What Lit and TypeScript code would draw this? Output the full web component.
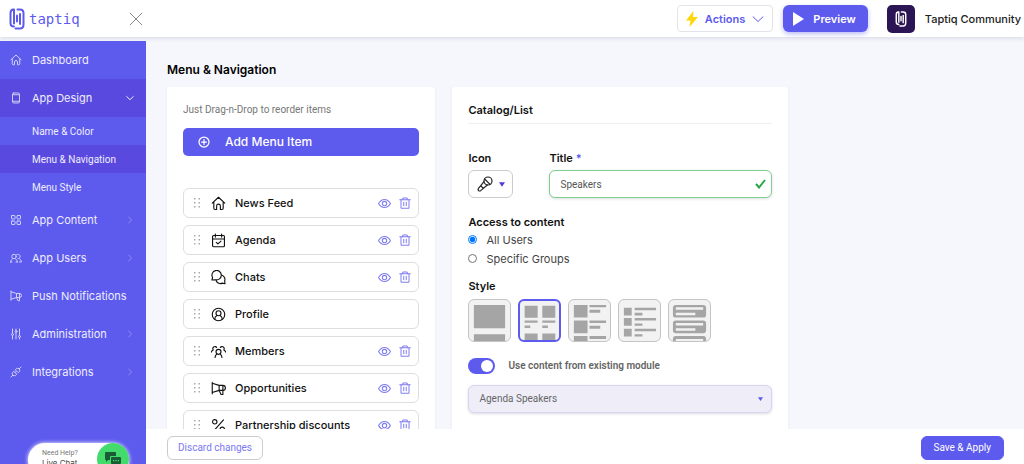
import { LitElement, html, css, svg, nothing, TemplateResult } from "lit";
import { customElement, state } from "lit/decorators.js";
import { classMap } from "lit/directives/class-map.js";

/* Stroke icons, all drawn on a 24 x 24 grid. */
const icons: Record<string, TemplateResult> = {
  home: svg`<path d="M2 11.500 12 2 22 11.500M4.500 9.500V19.500q0 2 2 2H9V16a3 3 0 0 1 6 0v5.500h2.500q2 0 2-2V9.500"/>`,
  phone: svg`<rect x="5" y="2" width="14" height="20" rx="2.500"/><path d="M5 5.500h14M5 18.500h14"/>`,
  grid: svg`<rect x="3" y="3" width="7" height="7" rx="1"/><rect x="14" y="3" width="7" height="7" rx="1"/><rect x="3" y="14" width="7" height="7" rx="1"/><rect x="14" y="14" width="7" height="7" rx="1"/>`,
  users: svg`<circle cx="8" cy="9" r="4.500"/><path d="M1 20q0-4 4-6.500M15 20q0-4-4-6.500M1 20h3M12 20h3"/><path d="M13 5.500a4.500 4.500 0 1 1 3 8M19 13.500q4 2.500 4 6.500h-4"/>`,
  horn: svg`<path d="M2 2v18.500M2 3.500 13 7h6a4 4 0 0 1 0 8h-6L2 18.500M13 7v8M13 15l3 6.500h3V7"/>`,
  sliders: svg`<path d="M5 2v9M5 15v7M12 2v3M12 9v13M19 2v13M19 19v3"/><circle cx="5" cy="13" r="2"/><circle cx="12" cy="7" r="2"/><circle cx="19" cy="17" r="2"/>`,
  plug: svg`<path d="M2 22l3.500-3.500M5.500 18.500a4.500 4.500 0 0 1 0-6l2-2 6 6-2 2a4.500 4.500 0 0 1-6 0zM10 13l2.500-2.500M22 2l-3.500 3.500M18.500 5.500a4.500 4.500 0 0 1 0 6l-2 2-6-6 2-2a4.500 4.500 0 0 1 6 0z"/>`,
  calendar: svg`<rect x="2.500" y="4" width="19" height="18" rx="1.500"/><path d="M2.500 9.500h19M7 1.500v5M17 1.500v5M8.500 15l2.500 2.500 5-4.500"/>`,
  chats: svg`<path d="M1.500 16l1-4a7.500 7.500 0 1 1 4.500 3.500zM17.500 8.500a6.800 6.800 0 0 1 4.300 9l.7 4.500-4.500-1A7 7 0 0 1 8.500 17.500"/>`,
  profile: svg`<circle cx="12" cy="12" r="10"/><circle cx="12" cy="10" r="4"/><path d="M6 19.500q0-4 3.500-6M18 19.500q0-4-3.500-6"/>`,
  members: svg`<circle cx="12" cy="12.500" r="4"/><path d="M6.500 21.500q0-3.500 3-5.500M17.500 21.500q0-3.500-3-5.500M3.500 9.500A3.300 3.300 0 1 1 9 5.500M.5 13q.5-2.500 3-3.500M20.500 9.500A3.300 3.300 0 1 0 15 5.500M23.500 13q-.5-2.500-3-3.500"/>`,
  percent: svg`<circle cx="6" cy="6" r="3.500"/><circle cx="18" cy="18" r="3.500"/><path d="M20 3 4 21"/>`,
  mic: svg`<circle cx="16.500" cy="7.500" r="6"/><path d="M11.500 4.500l8 8M10.500 8.500 2 19q-1 2 .5 3t3 0L15.500 13.500M6 15l3.500 3.500"/>`,
  eye: svg`<path d="M1 12q4.500-7.500 11-7.500t11 7.500q-4.500 7.500-11 7.500t-11-7.500z"/><circle cx="12" cy="12" r="4"/>`,
  trash: svg`<path d="M1.500 5.500h21M7.500 5.500V2h9v3.500M4 5.500V22.500h16V5.500M9.500 10.500v7M14.500 10.500v7"/>`,
  plus: svg`<circle cx="12" cy="12" r="10"/><path d="M12 7v10M7 12h10"/>`,
  close: svg`<path d="M2 2l20 20M22 2 2 22"/>`,
  right: svg`<path d="M8 3l8.500 9L8 21"/>`,
  down: svg`<path d="M2 7.500l10 9.500 10-9.500"/>`,
};

const icon = (name: string, cls = "") =>
  html`<svg class="icon ${cls}" viewBox="0 0 24 24" aria-hidden="true">${icons[name]}</svg>`;

const mark = html`<svg class="mark" viewBox="0 0 16 22" aria-hidden="true">
  <path d="M4.500 1.500Q1.500 1.500 1.500 5v10q0 3.500 3.500 3.500M5 1.500v14M8.500 1.500H11q3.500 0 3.500 3.500v11.500q0 4-3.500 4H6.500M11 6v10" />
  <path d="M8 7.500v6" />
</svg>`;

const triangle = html`<svg class="triangle" viewBox="0 0 8 6" aria-hidden="true"><path d="M0 0h8L4 6z" /></svg>`;

const nav = [
  { label: "Dashboard", icon: "home" },
  { label: "App Design", icon: "phone", children: ["Name & Color", "Menu & Navigation", "Menu Style"] },
  { label: "App Content", icon: "grid", more: true },
  { label: "App Users", icon: "users", more: true },
  { label: "Push Notifications", icon: "horn" },
  { label: "Administration", icon: "sliders", more: true },
  { label: "Integrations", icon: "plug", more: true },
];

const menu = [
  { label: "News Feed", icon: "home" },
  { label: "Agenda", icon: "calendar" },
  { label: "Chats", icon: "chats" },
  { label: "Profile", icon: "profile", fixed: true },
  { label: "Members", icon: "members" },
  { label: "Opportunities", icon: "horn" },
  { label: "Partnership discounts", icon: "percent" },
];

/* Blocks of each layout preview, on a 42 x 42 grid. */
const layouts = [
  { name: "Large cards", art: svg`<path d="M5 5h32v24H5zM5 35h32v7H5z"/>` },
  { name: "Two columns", art: svg`<path d="M5 5h14v13H5zM24 5h14v13H24zM5 21h14v2.500H5zM24 21h14v2.500H24zM5 26.500h6v2.500H5zM24 26.500h6v2.500h-6zM5 35h14v7H5zM24 35h14v7H24z"/>` },
  { name: "Large thumbnails", art: svg`<path d="M5 5h14v13H5zM5 21h14v13H5zM5 37h14v5H5zM21 5h17v2.500H21zM21 10h11v3H21zM21 21h17v2.500H21zM21 26.500h11v3H21zM21 37h17v3H21z"/>` },
  { name: "Small thumbnails", art: svg`<path d="M5 8h8v8H5zM5 18.500h8v8H5zM5 29.500h8v8H5zM16 8h22v2.500H16zM16 13h8v3h-8zM16 18.500h22V21H16zM16 24h8v2.500h-8zM16 29.500h22V32H16zM16 35h8v2.500h-8z"/>` },
  { name: "Banners", art: svg`<path fill-rule="evenodd" d="M7 5h28q3 0 3 3v7q0 3-3 3H7q-3 0-3-3V8q0-3 3-3zM7 7.500V10h28V7.500zM7 13v2.500h20V13zM7 21h28q3 0 3 3v7q0 3-3 3H7q-3 0-3-3v-7q0-3 3-3zM7 23.500V26h28v-2.500zM7 29v2.500h20V29zM4 42v-2q0-3 3-3h28q3 0 3 3v2h-3v-2H7v2z"/>` },
];

@customElement("app-root")
export class AppRoot extends LitElement {
  @state() private layout = 1;

  static styles = css`
    :host {
      --brand: #5d5aee;
      --small: 10px/16px Roboto, "Liberation Sans", sans-serif;
      display: flex;
      flex-direction: column;
      height: 100vh;
      overflow: hidden;
      background: #f6f7fc;
      color: #111;
      font: 11px/16px Inter, "Liberation Sans", sans-serif;
    }
    *, *::before { box-sizing: border-box; }
    button, input, select { font: inherit; margin: 0; }
    button { cursor: pointer; }
    a { color: inherit; text-decoration: none; }
    ul { list-style: none; margin: 0; padding: 0; }
    h1, h2, p { margin: 0; }
    .icon {
      width: 12px;
      height: 12px;
      flex: none;
      fill: none;
      stroke: currentColor;
      stroke-width: 2;
      stroke-linejoin: round;
      stroke-linecap: round;
    }

    header {
      display: flex;
      align-items: center;
      flex: none;
      height: 37px;
      padding: 0 3px 0 9px;
      background: #fff;
      box-shadow: 0 2px 4px #dddeeb;
      margin-bottom: 4px;
    }
    .logo { display: flex; align-items: center; gap: 4px; width: 120px; color: var(--brand); }
    .mark { width: 16px; height: 22px; fill: none; stroke: currentColor; stroke-width: 2; stroke-linecap: round; }
    .word { font: 14px/20px "DejaVu Sans Mono", monospace; }
    .close { border: 0; padding: 0; background: none; color: #777; display: flex; }
    .close .icon { width: 14px; height: 14px; stroke-width: 1.500; }
    .tools { display: flex; align-items: center; margin-left: auto; }
    .actions, .preview {
      display: flex;
      align-items: center;
      height: 27px;
      border-radius: 4px;
      font-weight: 600;
    }
    .actions { gap: 7px; padding: 0 8px; border: 1px solid #e3e3ea; background: #fff; color: var(--brand); margin-right: 10px; }
    .bolt { width: 12px; height: 16px; fill: #ffd60a; }
    .preview { gap: 9px; padding: 0 12px 0 9px; border: 0; background: var(--brand); color: #fff; box-shadow: 0 2px 5px #bcbaf5; border-radius: 6px; }
    .play { width: 12px; height: 14px; fill: #fff; }
    .app { display: flex; align-items: center; gap: 10px; margin-left: 19px; color: #222; font-weight: 500; }
    .badge { display: grid; place-items: center; width: 28px; height: 28px; border-radius: 5px; background: #2b1554; color: #fff; }
    .badge .mark { width: 12px; height: 16px; }

    .body { display: flex; flex: 1; min-height: 0; }
    .side {
      position: relative;
      flex: none;
      width: 146px;
      overflow: hidden;
      background: var(--brand);
      color: #eeedff;
    }
    .item { display: flex; align-items: center; gap: 10px; height: 38px; padding: 0 12px 0 10px; white-space: nowrap; }
    .item .icon { stroke-width: 2; opacity: 0.8; }
    .item .right, .item .down { width: 8px; height: 8px; margin-left: auto; }
    .item .right { opacity: 0.5; }
    .item .down { stroke-width: 3; opacity: 1; }
    .open, .current { background: #5a49de; }
    .sub { display: flex; align-items: center; height: 28px; padding: 1px 0 0 32px; font: var(--small); }
    .chat {
      position: absolute;
      left: 28px;
      top: 402px;
      display: flex;
      width: 101px;
      height: 34px;
      padding: 5px 0 0 14px;
      border-radius: 17px;
      background: #fff;
      box-shadow: 0 0 4px #fff;
      color: #444;
      font-size: 8px;
      line-height: 10px;
    }
    .chat small { display: block; color: #777; font: 7px/10px Roboto, sans-serif; }
    .bubble {
      position: absolute;
      right: 0;
      top: 0;
      display: grid;
      place-items: center;
      width: 32px;
      height: 32px;
      border-radius: 50%;
      background: #43db6b;
    }
    .bubble svg { width: 16px; height: 14px; }

    main { display: flex; flex-direction: column; flex: 1; min-width: 0; }
    .scroll { flex: 1; min-height: 0; overflow: hidden; padding: 20px 20px 0 21px; }
    h1 { font-size: 12px; line-height: 18px; font-weight: 600; color: #000; }
    .cards { display: grid; grid-template-columns: 4fr 5fr; gap: 17px; max-width: 621px; margin-top: 8px; }
    .card { padding: 15px 16px; border-radius: 3px; background: #fff; box-shadow: 0 1px 3px #e6e7f0; }
    .hint { font: var(--small); color: #777; }
    .add {
      display: flex;
      align-items: center;
      gap: 15px;
      width: 100%;
      height: 28px;
      margin: 10px 0 32px;
      padding: 0 15px;
      border: 0;
      border-radius: 5px;
      background: var(--brand);
      color: #fff;
      font-size: 12px;
      font-weight: 500;
    }
    .add .icon { stroke-width: 2.500; }
    .menu { display: grid; gap: 7px; }
    .entry {
      display: flex;
      align-items: center;
      height: 30px;
      padding: 0 7px 0 10px;
      border: 1px solid #dedee2;
      border-radius: 6px;
      font-weight: 500;
      white-space: nowrap;
    }
    .entry .grip { width: 6px; height: 10px; margin-right: 11px; fill: #aaa; }
    .entry .kind { width: 15px; height: 15px; margin-right: 9px; stroke-width: 1.800; }
    .acts { display: flex; gap: 8px; margin-left: auto; }
    .acts button { display: flex; padding: 0; border: 0; background: none; color: #807df2; }
    .acts .eye { width: 13px; height: 13px; }

    h2 { padding-bottom: 5px; border-bottom: 1px solid #eee; font-size: 11px; line-height: 16px; font-weight: 600; }
    .fields { display: grid; grid-template-columns: 45px 1fr; column-gap: 36px; row-gap: 4px; margin-top: 26px; }
    .name { font-weight: 600; }
    .name i { color: var(--brand); font-style: normal; }
    .pick {
      display: flex;
      align-items: center;
      justify-content: center;
      gap: 6px;
      height: 28px;
      border: 1px solid #ccc;
      border-radius: 6px;
      background: #fff;
      color: #222;
    }
    .pick .icon { width: 16px; height: 16px; stroke-width: 1.800; }
    .triangle { width: 6px; height: 5px; fill: #5438dc; }
    .box { display: grid; align-items: center; }
    .box > * { grid-area: 1 / 1; }
    .box svg { justify-self: end; margin-right: 9px; pointer-events: none; }
    .box .triangle { width: 5px; height: 4px; fill: var(--brand); }
    .text, .select {
      width: 100%;
      height: 28px;
      padding: 0 10px;
      border-radius: 6px;
      outline: 0;
      appearance: none;
      font: var(--small);
      color: #555;
      box-shadow: 0 1px 3px #dcdce4;
    }
    .text { border: 1px solid #7fd08f; background: #fff; }
    .box .tick { width: 11px; height: 10px; margin-right: 6px; fill: none; stroke: #28a745; stroke-width: 2; }
    .select { border: 1px solid #d8d5f3; background: #eeedf8; color: #666; }
    fieldset { min-width: 0; margin: 16px 0 0; padding: 0; border: 0; }
    fieldset + fieldset { margin-top: 10px; }
    legend { padding: 0; font-weight: 600; }
    .radio { display: flex; align-items: center; gap: 9px; height: 19px; color: #444; }
    .radio input { width: 9px; height: 9px; accent-color: #0075ff; }
    .tiles { display: flex; gap: 7px; margin-top: 5px; }
    .tile {
      display: block;
      width: 43px;
      height: 43px;
      overflow: hidden;
      border: 1px solid #c4c4c4;
      border-radius: 6px;
      background: #f2f2f2;
      cursor: pointer;
    }
    .tile.on { border: 2px solid var(--brand); }
    .tile svg { display: block; width: 100%; height: 100%; fill: #a5a5a5; }
    .tile input { position: absolute; opacity: 0; pointer-events: none; }
    .switch { display: flex; align-items: center; gap: 13px; margin: 16px 0 11px; color: #666; font: var(--small); font-weight: 600; }
    .switch input { appearance: none; width: 27px; height: 16px; padding: 2px; border-radius: 8px; background: #ccc; }
    .switch input::before { content: ""; display: block; width: 12px; height: 12px; border-radius: 50%; background: #fff; }
    .switch input:checked { background: var(--brand); }
    .switch input:checked::before { margin-left: auto; }
    .bottom { padding-bottom: 40px; }

    footer {
      display: flex;
      align-items: center;
      justify-content: space-between;
      flex: none;
      padding: 7px 20px 4px 21px;
      background: #fff;
    }
    .discard, .save { height: 24px; padding: 0 10px; border: 1px solid #ccc; border-radius: 6px; background: #fff; color: #7b78f1; font: var(--small); }
    .save { padding: 0 12px; border-color: var(--brand); background: var(--brand); color: #fff; }
  `;

  private renderNav() {
    return html`<nav class="side" aria-label="Main">
      ${nav.map(
        (n) => html`<a class=${classMap({ item: true, open: !!n.children })} href="#">
            ${icon(n.icon)}<span>${n.label}</span>
            ${n.children ? icon("down", "down") : n.more ? icon("right", "right") : nothing}
          </a>
          ${n.children?.map(
            (c) => html`<a class=${classMap({ sub: true, current: c === "Menu & Navigation" })} href="#">${c}</a>`
          )}`
      )}
      <a class="chat" href="#">
        <span><small>Need Help?</small>Live Chat</span>
        <span class="bubble">
          <svg viewBox="0 0 16 14" aria-hidden="true">
            <path fill="#185c35" d="M1 0h9q1 0 1 1v3H6Q5 4 5 5v3H3l-2 2V8Q0 8 0 7V1q0-1 1-1z" />
            <path fill="#185c35" d="M7 5h8q1 0 1 1v5q0 1-1 1v2l-2-2H7q-1 0-1-1V6q0-1 1-1z" />
            <path fill="#43db6b" d="M8 8h1.300v1.300H8zM10.400 8h1.300v1.300h-1.300zM12.800 8h1.300v1.300h-1.300z" />
          </svg>
        </span>
      </a>
    </nav>`;
  }

  private renderMenu() {
    return html`<section class="card">
      <p class="hint">Just Drag-n-Drop to reorder items</p>
      <button class="add">${icon("plus")}Add Menu Item</button>
      <ul class="menu">
        ${menu.map(
          (m) => html`<li class="entry">
            <svg class="grip" viewBox="0 0 6 10" aria-hidden="true">
              <path d="M0 0h1.500v1.500H0zM4.500 0H6v1.500H4.500zM0 4h1.500v1.500H0zM4.500 4H6v1.500H4.500zM0 8h1.500v1.500H0zM4.500 8H6v1.500H4.500z" />
            </svg>
            ${icon(m.icon, "kind")}<span>${m.label}</span>
            ${m.fixed
              ? nothing
              : html`<span class="acts">
                  <button aria-label="Show or hide ${m.label}">${icon("eye", "eye")}</button>
                  <button aria-label="Delete ${m.label}">${icon("trash")}</button>
                </span>`}
          </li>`
        )}
      </ul>
    </section>`;
  }

  private renderDetail() {
    return html`<section class="card bottom">
      <h2>Catalog/List</h2>
      <div class="fields">
        <span class="name" id="icon-label">Icon</span>
        <label class="name" for="title">Title <i>*</i></label>
        <button class="pick" aria-labelledby="icon-label">${icon("mic")}${triangle}</button>
        <div class="box">
          <input class="text" id="title" type="text" value="Speakers" />
          <svg class="tick" viewBox="0 0 11 10" aria-hidden="true"><path d="M1 5l3 3.500L10 1" /></svg>
        </div>
      </div>
      <fieldset>
        <legend>Access to content</legend>
        <label class="radio"><input type="radio" name="access" checked />All Users</label>
        <label class="radio"><input type="radio" name="access" />Specific Groups</label>
      </fieldset>
      <fieldset>
        <legend>Style</legend>
        <div class="tiles">
          ${layouts.map(
            (l, i) => html`<label class=${classMap({ tile: true, on: i === this.layout })}>
              <input type="radio" name="layout" aria-label=${l.name} .checked=${i === this.layout} @change=${() => (this.layout = i)} />
              <svg viewBox="0 0 42 42" aria-hidden="true">${l.art}</svg>
            </label>`
          )}
        </div>
      </fieldset>
      <label class="switch"><input type="checkbox" role="switch" checked />Use content from existing module</label>
      <div class="box">
        <select class="select" aria-label="Existing module"><option>Agenda Speakers</option></select>
        ${triangle}
      </div>
    </section>`;
  }

  render() {
    return html`
      <header>
        <a class="logo" href="#">${mark}<span class="word">taptiq</span></a>
        <button class="close" aria-label="Close menu">${icon("close")}</button>
        <div class="tools">
          <button class="actions">
            <svg class="bolt" viewBox="0 0 12 16" aria-hidden="true"><path d="M7.500 0 0 9.500h4.500L3.500 16 12 6H7z" /></svg>
            Actions ${icon("down", "down")}
          </button>
          <button class="preview">
            <svg class="play" viewBox="0 0 12 14" aria-hidden="true"><path d="M1 0 12 7 1 14z" /></svg>
            Preview
          </button>
          <div class="app"><span class="badge">${mark}</span>Taptiq Community</div>
        </div>
      </header>
      <div class="body">
        ${this.renderNav()}
        <main>
          <div class="scroll">
            <h1>Menu &amp; Navigation</h1>
            <div class="cards">${this.renderMenu()}${this.renderDetail()}</div>
          </div>
          <footer>
            <button class="discard">Discard changes</button>
            <button class="save">Save &amp; Apply</button>
          </footer>
        </main>
      </div>
    `;
  }
}
